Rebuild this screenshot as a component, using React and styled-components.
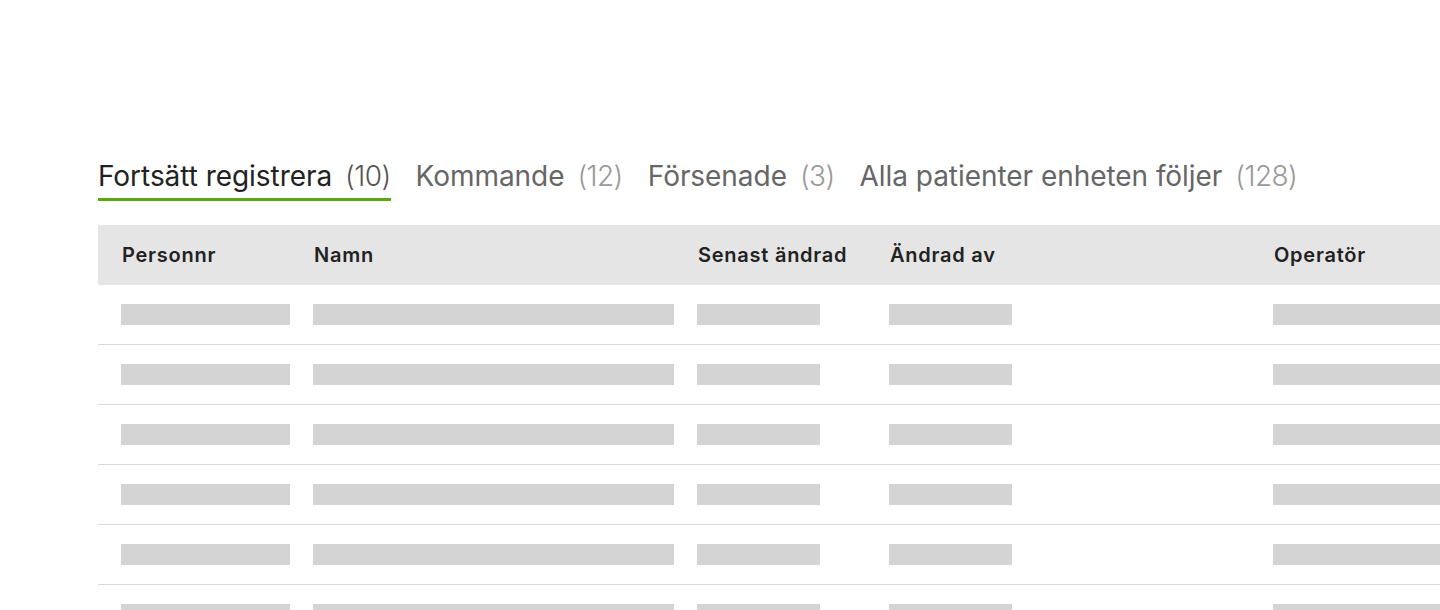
import React from "react";
import styled, { createGlobalStyle } from "styled-components";

const GlobalStyle = createGlobalStyle`
  html, body {
    margin: 0;
    padding: 0;
    background: #ffffff;
    overflow: hidden;
  }
  body {
    font-family: Inter, "Noto Sans", Arial, sans-serif;
    color: #222;
  }
`;

const Page = styled.div`
  padding: 156px 0 0 98px;
`;

const TabBar = styled.nav`
  display: flex;
  align-items: flex-end;
  gap: 25px;
`;

const Tab = styled.div`
  display: flex;
  align-items: baseline;
  gap: 13px;
  font-size: 28px;
  line-height: 40px;
  padding-bottom: 2px;
  border-bottom: 3px solid ${(p) => (p.$active ? "#5aa90c" : "transparent")};
  color: ${(p) => (p.$active ? "#222222" : "#666666")};
  cursor: pointer;
  white-space: nowrap;
`;

const Label = styled.span`
  letter-spacing: -0.05px;
`;

const Count = styled.span`
  font-weight: 300;
  letter-spacing: -0.6px;
  color: ${(p) => (p.$active ? "#555555" : "#999999")};
`;

const TableWrap = styled.div`
  margin-top: 24px;
  overflow: hidden;
`;

const Table = styled.div`
  width: 1536px;
`;

const columns = "192px 384px 192px 384px 384px";

const HeaderRow = styled.div`
  display: grid;
  grid-template-columns: ${columns};
  height: 60px;
  align-items: center;
  background: #e5e5e5;
`;

const HeaderCell = styled.div`
  padding-left: 24px;
  font-size: 20px;
  font-weight: 600;
  letter-spacing: 0.75px;
  color: #222;
  white-space: nowrap;
`;

const Row = styled.div`
  display: grid;
  grid-template-columns: ${columns};
  height: 59px;
  align-items: center;
  border-bottom: 1px solid #d9d9d9;
`;

const Cell = styled.div`
  padding-left: 23px;
`;

const Skeleton = styled.div`
  height: 21px;
  width: ${(p) => p.$width || "100%"};
  background: #d4d4d4;
`;

const tabs = [
  { label: "Fortsätt registrera", count: 10, active: true },
  { label: "Kommande", count: 12 },
  { label: "Försenade", count: 3 },
  { label: "Alla patienter enheten följer", count: 128 },
];

const headers = ["Personnr", "Namn", "Senast ändrad", "Ändrad av", "Operatör"];
const barWidths = ["100%", "100%", "123px", "123px", "100%"];

export default function App() {
  const rows = Array.from({ length: 7 });

  return (
    <Page>
      <GlobalStyle />
      <TabBar>
        {tabs.map((t) => (
          <Tab key={t.label} $active={t.active}>
            <Label>{t.label}</Label>
            <Count $active={t.active}>({t.count})</Count>
          </Tab>
        ))}
      </TabBar>

      <TableWrap>
        <Table>
          <HeaderRow>
            {headers.map((h) => (
              <HeaderCell key={h}>{h}</HeaderCell>
            ))}
          </HeaderRow>
          {rows.map((_, i) => (
            <Row key={i}>
              {barWidths.map((w, j) => (
                <Cell key={j}>
                  <Skeleton $width={w} />
                </Cell>
              ))}
            </Row>
          ))}
        </Table>
      </TableWrap>
    </Page>
  );
}
